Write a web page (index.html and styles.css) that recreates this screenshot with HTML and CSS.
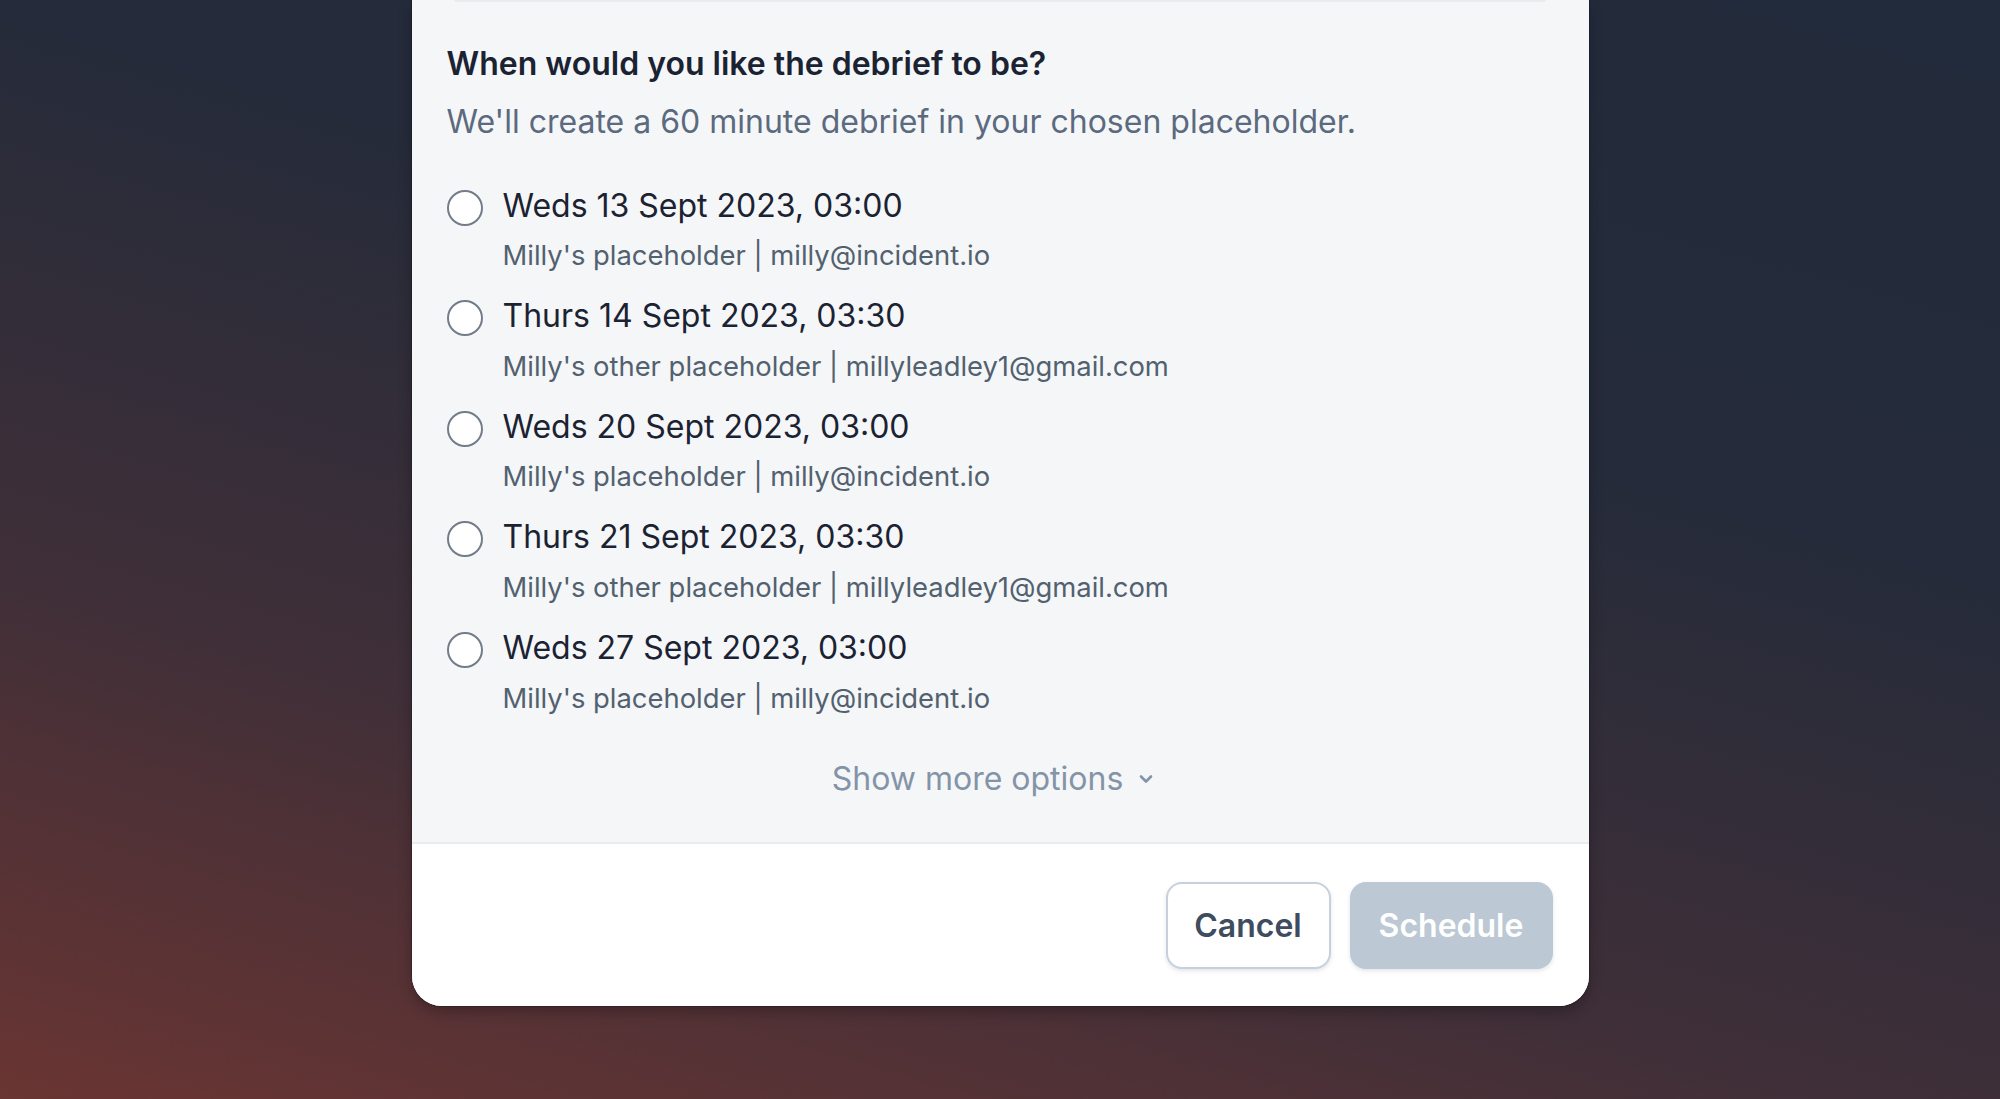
FILE: index.html
```html
<!DOCTYPE html>
<html lang="en">
  <head>
    <meta charset="UTF-8" />
    <meta name="viewport" content="width=device-width, initial-scale=1.0" />
    <title>Schedule debrief</title>
    <link rel="stylesheet" href="styles.css">
  </head>
  <body>
    <div class="modal">
      <div class="modal-body">
        <div class="field-edge"></div>
        <h2 class="question">When would you like the debrief to be?</h2>
        <p class="hint">We'll create a 60 minute debrief in your chosen placeholder.</p>
        <ul class="options">
          <li class="option">
            <span class="radio"></span>
            <div>
              <div class="option-title">Weds 13 Sept 2023, 03:00</div>
              <div class="option-sub">Milly's placeholder | milly@incident.io</div>
            </div>
          </li>
          <li class="option">
            <span class="radio"></span>
            <div>
              <div class="option-title">Thurs 14 Sept 2023, 03:30</div>
              <div class="option-sub">Milly's other placeholder | millyleadley1@gmail.com</div>
            </div>
          </li>
          <li class="option">
            <span class="radio"></span>
            <div>
              <div class="option-title">Weds 20 Sept 2023, 03:00</div>
              <div class="option-sub">Milly's placeholder | milly@incident.io</div>
            </div>
          </li>
          <li class="option">
            <span class="radio"></span>
            <div>
              <div class="option-title">Thurs 21 Sept 2023, 03:30</div>
              <div class="option-sub">Milly's other placeholder | millyleadley1@gmail.com</div>
            </div>
          </li>
          <li class="option">
            <span class="radio"></span>
            <div>
              <div class="option-title">Weds 27 Sept 2023, 03:00</div>
              <div class="option-sub">Milly's placeholder | milly@incident.io</div>
            </div>
          </li>
        </ul>
        <div class="more">
          <span>Show more options</span>
          <svg class="chevron" width="16" height="12" viewBox="0 0 16 12">
            <path d="M3 3.5 L8 8.5 L13 3.5" fill="none" stroke="#8494a7" stroke-width="2.6" stroke-linecap="round" stroke-linejoin="round" />
          </svg>
        </div>
      </div>
      <div class="modal-footer">
        <button class="btn btn-cancel">Cancel</button>
        <button class="btn btn-primary" disabled>Schedule</button>
      </div>
    </div>
  </body>
</html>
```

FILE: styles.css
```css
html,
body {
  height: 100%;
}
body {
  margin: 0;
  overflow: hidden;
  font-family: Inter, "Noto Sans", sans-serif;
  background: linear-gradient(196deg, #222b3b 0%, #252b3a 35%, #3f2f38 68%, #6a3533 100%);
}
.modal {
  width: 1177px;
  margin: 0 auto;
  background: #f5f6f8;
  border-radius: 0 0 30px 30px;
  overflow: hidden;
  box-shadow: 0 0 0 1px rgba(20, 20, 30, 0.35), 0 6px 14px rgba(0, 0, 0, 0.25);
}
.modal-body {
  padding: 0 37px 43.5px 35px;
}
.field-edge {
  height: 2px;
  margin: 0 6px 0 7px;
  background: #e9ebee;
  border-radius: 0 0 6px 6px;
}
.question {
  margin: 42px 0 0;
  font-size: 32px;
  line-height: 40px;
  font-weight: 600;
  color: #1b2333;
}
.hint {
  margin: 17.5px 0 0;
  font-size: 32px;
  line-height: 40px;
  color: #5b6a7e;
}
.options {
  list-style: none;
  margin: 44px 0 0;
  padding: 0;
  display: flex;
  flex-direction: column;
  gap: 22.9px;
}
.option {
  display: flex;
  align-items: flex-start;
  gap: 20px;
}
.radio {
  flex: none;
  width: 32px;
  height: 32px;
  margin-top: 4px;
  border: 2px solid #737c8a;
  border-radius: 50%;
  background: #fff;
}
.option-title {
  font-size: 32px;
  line-height: 40px;
  color: #1b2333;
}
.option-sub {
  margin-top: 11.7px;
  font-size: 27.4px;
  line-height: 36px;
  color: #52616f;
}
.more {
  margin-top: 43px;
  padding-right: 12px;
  display: flex;
  justify-content: center;
  align-items: center;
  gap: 15px;
  font-size: 32px;
  line-height: 40px;
  color: #8494a7;
}
.modal-footer {
  border-top: 2px solid #e9ebee;
  background: #fff;
  padding: 38px 36px 37px;
  display: flex;
  justify-content: flex-end;
  gap: 19px;
}
.btn {
  font-family: inherit;
  font-size: 32px;
  font-weight: 600;
  height: 87px;
  border-radius: 16px;
  box-shadow: 0 2px 4px rgba(30, 40, 60, 0.12);
}
.btn-cancel {
  width: 165px;
  background: #fff;
  color: #3f4c5f;
  border: 2px solid #c6d1dd;
}
.btn-primary {
  width: 203px;
  background: #bcc8d4;
  color: #fff;
  border: none;
}
```
